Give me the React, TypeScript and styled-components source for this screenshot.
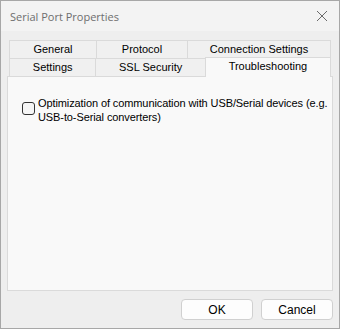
import styled, { createGlobalStyle } from 'styled-components'

const GlobalStyle = createGlobalStyle`
    html, body {
        margin: 0;
        padding: 0;
        background: #ffffff;
    }
    * {
        box-sizing: border-box;
    }
`;

const Window = styled.div`
    width: 340px;
    height: 329px;
    border: 1px solid #a7a7a7;
    background: #eeeeee;
    display: flex;
    flex-direction: column;
    font-family: "Liberation Sans", Arial, sans-serif;
    font-size: 11px;
    color: #000000;
`;

const TitleBar = styled.div`
    height: 30px;
    background: #f3f3f3;
    display: flex;
    align-items: center;
    justify-content: space-between;
    padding: 0 9px 0 9px;
`;

const Title = styled.span`
    font-family: "Open Sans", "Noto Sans", sans-serif;
    font-size: 11px;
    color: #6e6e6e;
`;

const CloseButton = styled.button`
    border: none;
    background: transparent;
    padding: 0;
    width: 12px;
    height: 12px;
    display: flex;
    margin-right: 2px;
`;

const Body = styled.div`
    flex: 1;
    display: flex;
    flex-direction: column;
    padding: 9px 6px 0 6px;
`;

const TabArea = styled.div`
    display: flex;
    flex-direction: column;
    padding: 0 2px;
`;

const TabRow = styled.div`
    display: flex;
    height: 19px;
    & + & {
        margin-top: -1px;
    }
`;

const Tab = styled.div<{ $width: number; $selected?: boolean }>`
    width: ${p => p.$width}px;
    height: ${p => (p.$selected ? 20 : 19)}px;
    border: 1px solid #dadada;
    border-bottom: ${p => (p.$selected ? 'none' : '1px solid #dadada')};
    background: ${p => (p.$selected ? '#f9f9f9' : '#f0f0f0')};
    display: flex;
    justify-content: center;
    align-items: center;
    padding-bottom: ${p => (p.$selected ? 3 : 1)}px;
    position: relative;
    top: ${p => (p.$selected ? -1 : 0)}px;
    z-index: ${p => (p.$selected ? 1 : 0)};
    & + & {
        margin-left: -1px;
    }
`;

const Panel = styled.div`
    height: 215px;
    margin-top: -1px;
    border: 1px solid #dadada;
    background: #f9f9f9;
    padding: 19px 0 0 14px;
`;

const CheckRow = styled.label`
    display: flex;
    align-items: flex-start;
    gap: 3px;
    font-size: 11px;
    line-height: 14px;
    letter-spacing: -0.1px;
    white-space: nowrap;
`;

const CheckBox = styled.span`
    width: 13px;
    height: 13px;
    margin-top: 6px;
    flex-shrink: 0;
    border: 1px solid #333333;
    border-radius: 3px;
    background: #f6f6f6;
`;

const Footer = styled.div`
    display: flex;
    justify-content: flex-end;
    gap: 8px;
    padding: 8px 0 0 0;
`;

const Button = styled.button`
    width: 72px;
    height: 21px;
    border: 1px solid #d0d0d0;
    border-radius: 4px;
    background: #fdfdfd;
    font-family: "Liberation Sans", Arial, sans-serif;
    font-size: 12px;
    color: #000000;
    padding: 0;
`;

const topTabs = [
    { label: 'General', width: 88 },
    { label: 'Protocol', width: 92 },
    { label: 'Connection Settings', width: 144 },
];

const bottomTabs = [
    { label: 'Settings', width: 88 },
    { label: 'SSL Security', width: 111 },
    { label: 'Troubleshooting', width: 127, selected: true },
];

export default function App() {
    return (
        <>
            <GlobalStyle />
            <Window>
                <TitleBar>
                    <Title>Serial Port Properties</Title>
                    <CloseButton aria-label="Close">
                        <svg width="12" height="12" viewBox="0 0 12 12">
                            <path d="M1 1 L11 11 M11 1 L1 11" stroke="#6a6a6a" strokeWidth="1" />
                        </svg>
                    </CloseButton>
                </TitleBar>
                <Body>
                    <TabArea>
                        <TabRow>
                            {topTabs.map(t => (
                                <Tab key={t.label} $width={t.width}>{t.label}</Tab>
                            ))}
                        </TabRow>
                        <TabRow>
                            {bottomTabs.map(t => (
                                <Tab key={t.label} $width={t.width} $selected={t.selected}>{t.label}</Tab>
                            ))}
                        </TabRow>
                    </TabArea>
                    <Panel>
                        <CheckRow>
                            <CheckBox />
                            <span>
                                Optimization of communication with USB/Serial devices (e.g.
                                <br />
                                USB-to-Serial converters)
                            </span>
                        </CheckRow>
                    </Panel>
                    <Footer>
                        <Button>OK</Button>
                        <Button>Cancel</Button>
                    </Footer>
                </Body>
            </Window>
        </>
    )
}
